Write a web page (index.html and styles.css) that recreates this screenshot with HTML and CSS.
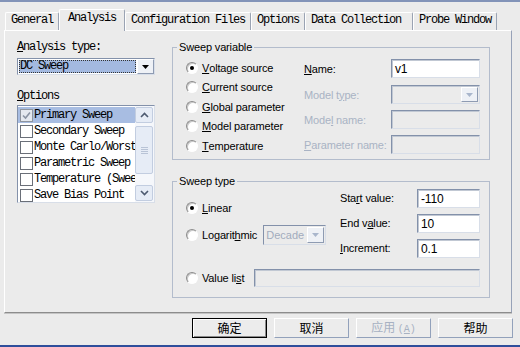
FILE: index.html
```html
<!DOCTYPE html>
<html lang="en">
<head>
    <meta charset="UTF-8">
    <title>Simulation Settings</title>
    <link rel="stylesheet" href="styles.css">
</head>
<body>
    <div class="dialog">
        <div class="tabs">
            <div class="tab">General</div>
            <div class="tab tab-active">Analysis</div>
            <div class="tab">Configuration Files</div>
            <div class="tab">Options</div>
            <div class="tab">Data Collection&nbsp;</div>
            <div class="tab">Probe Window</div>
        </div>

        <div class="panel">
            <!-- left column: analysis type + options list -->
            <div class="left">
                <div class="mono-label"><u>A</u>nalysis type:</div>
                <div class="combo">
                    <div class="combo-value"><span>DC Sweep</span></div>
                    <div class="combo-btn">
                        <svg width="7" height="4" viewBox="0 0 7 4"><path d="M0 0h7L3.5 4z" fill="#000"/></svg>
                    </div>
                </div>

                <div class="mono-label options-label"><u>O</u>ptions</div>
                <div class="listbox">
                    <div class="list-items">
                        <div class="item item-selected"><span class="check check-on"><svg width="9" height="9" viewBox="0 0 9 9"><path d="M1 4.5l2.5 2.5L8 1.5" fill="none" stroke="#8a93a3" stroke-width="1.6"/></svg></span>Primary Sweep</div>
                        <div class="item"><span class="check"></span>Secondary Sweep</div>
                        <div class="item"><span class="check"></span>Monte Carlo/Worst</div>
                        <div class="item"><span class="check"></span>Parametric Sweep</div>
                        <div class="item"><span class="check"></span>Temperature (Swee</div>
                        <div class="item"><span class="check"></span>Save Bias Point</div>
                    </div>
                    <div class="scrollbar">
                        <div class="sb-btn">
                            <svg width="9" height="6" viewBox="0 0 9 6"><path d="M1 5l3.5-3.5L8 5" fill="none" stroke="#4d5a70" stroke-width="1.6"/></svg>
                        </div>
                        <div class="sb-track">
                            <div class="sb-thumb">
                                <span></span><span></span><span></span><span></span>
                            </div>
                        </div>
                        <div class="sb-btn">
                            <svg width="9" height="6" viewBox="0 0 9 6"><path d="M1 1l3.5 3.5L8 1" fill="none" stroke="#4d5a70" stroke-width="1.6"/></svg>
                        </div>
                    </div>
                </div>
            </div>

            <!-- right column: sweep groups -->
            <div class="right">
                <fieldset class="group">
                    <legend>Sweep variable</legend>
                    <div class="group-body">
                        <div class="radio-list">
                            <label class="radio-row"><span class="radio radio-on"></span><u>V</u>oltage source</label>
                            <label class="radio-row"><span class="radio"></span><u>C</u>urrent source</label>
                            <label class="radio-row"><span class="radio"></span><u>G</u>lobal parameter</label>
                            <label class="radio-row"><span class="radio"></span><u>M</u>odel parameter</label>
                            <label class="radio-row"><span class="radio"></span><u>T</u>emperature</label>
                        </div>
                        <div class="fields">
                            <div class="field-row">
                                <span class="field-label"><u>N</u>ame:</span>
                                <div class="input">v1</div>
                            </div>
                            <div class="field-row field-row-gap">
                                <span class="field-label disabled">Model t<u>y</u>pe:</span>
                                <div class="input input-disabled input-combo">
                                    <div class="mini-btn">
                                        <svg width="7" height="4" viewBox="0 0 7 4"><path d="M0 0h7L3.5 4z" fill="#a9b6cc"/></svg>
                                    </div>
                                </div>
                            </div>
                            <div class="field-row">
                                <span class="field-label disabled">Mode<u>l</u> name:</span>
                                <div class="input input-disabled"></div>
                            </div>
                            <div class="field-row">
                                <span class="field-label disabled"><u>P</u>arameter name:</span>
                                <div class="input input-disabled"></div>
                            </div>
                        </div>
                    </div>
                </fieldset>

                <fieldset class="group group-type">
                    <legend>Sweep type</legend>
                    <div class="type-body">
                        <div class="type-top">
                            <div class="type-radios">
                                <label class="radio-row"><span class="radio radio-on"></span><u>L</u>inear</label>
                                <label class="radio-row radio-row-log">
                                    <span class="radio"></span>Logarit<u>h</u>mic
                                    <div class="decade">
                                        <span>Decade</span>
                                        <div class="mini-btn">
                                            <svg width="7" height="4" viewBox="0 0 7 4"><path d="M0 0h7L3.5 4z" fill="#a9b6cc"/></svg>
                                        </div>
                                    </div>
                                </label>
                            </div>
                            <div class="values">
                                <span class="field-label">Sta<u>r</u>t value:</span>
                                <div class="input">-110</div>
                                <span class="field-label">End v<u>a</u>lue:</span>
                                <div class="input">10</div>
                                <span class="field-label"><u>I</u>ncrement:</span>
                                <div class="input">0.1</div>
                            </div>
                        </div>
                        <label class="radio-row value-list">
                            <span class="radio"></span>Value li<u>s</u>t
                            <div class="input input-disabled input-wide"></div>
                        </label>
                    </div>
                </fieldset>
            </div>
        </div>

        <div class="buttons">
            <button class="btn btn-default">确定</button>
            <button class="btn">取消</button>
            <button class="btn btn-disabled">应用 <small>(<u>A</u>)</small></button>
            <button class="btn">帮助</button>
        </div>
    </div>
</body>
</html>
```

FILE: styles.css
```css
body {
    margin: 0;
    background-color: #ebebeb;
    font-family: "Liberation Sans", Arial, sans-serif;
    font-size: 11px;
    letter-spacing: -0.15px;
    color: #000;
}

.dialog {
    width: 520px;
    height: 347px;
    box-sizing: border-box;
    border-top: 2px solid #8293b8;
    border-bottom: 2px solid #2f4e9b;
}

/* tabs */

.tabs {
    display: flex;
    align-items: flex-end;
    height: 28px;
    padding-left: 5px;
}

.tab {
    height: 18px;
    box-sizing: border-box;
    padding: 1px 5px 0;
    font-family: "Liberation Mono", monospace;
    font-size: 12px;
    letter-spacing: -1.2px;
    line-height: 13px;
    white-space: pre;
    border-top: 1px solid #fff;
    border-left: 1px solid #fff;
    border-right: 1px solid #9aa3b3;
    border-radius: 2px 2px 0 0;
}

.tab-active {
    position: relative;
    height: 22px;
    margin-bottom: -1px;
    padding: 2px 8px 0;
    background-color: #ebebeb;
    z-index: 2;
}

.panel {
    display: flex;
    gap: 17px;
    height: 283px;
    box-sizing: border-box;
    margin: 0 8px 0 4px;
    padding: 10px 0 0 12px;
    border-top: 1px solid #fff;
    border-left: 1px solid #fff;
    border-right: 1px solid #97a2b8;
    border-bottom: 1px solid #8c8c8c;
    box-shadow: 0 1px 0 #c4c4c4;
}

/* left column */

.left {
    width: 138px;
}

.mono-label,
.combo-value span,
.item {
    font-family: "Liberation Mono", monospace;
    font-size: 12px;
    letter-spacing: -1.2px;
    line-height: 13px;
}

.combo {
    display: flex;
    height: 17px;
    margin-top: 4px;
    box-sizing: border-box;
    border: 1px solid;
    border-color: #8391aa #d8dee8 #d8dee8 #8391aa;
    background-color: #fff;
}

.combo-value {
    flex: 1;
    padding: 1px;
}

.combo-value span {
    display: block;
    height: 100%;
    box-sizing: border-box;
    padding-left: 1px;
    background-color: #a3b9e0;
    outline: 1px dotted #333;
    outline-offset: -1px;
}

.combo-btn, .mini-btn {
    display: flex;
    align-items: center;
    justify-content: center;
    width: 17px;
    flex-shrink: 0;
    box-sizing: border-box;
    background-color: #eef1f6;
    border: 1px solid;
    border-color: #fff #8e9bb2 #8e9bb2 #fff;
}

.options-label {
    margin-top: 15px;
}

.listbox {
    display: flex;
    height: 98px;
    margin-top: 2px;
    box-sizing: border-box;
    border: 1px solid;
    border-color: #8391aa #d8dee8 #d8dee8 #8391aa;
    background-color: #fff;
}

.list-items {
    flex: 1;
    padding-top: 1px;
    overflow: hidden;
}

.item {
    display: flex;
    align-items: center;
    height: 16px;
    padding-left: 2px;
    white-space: nowrap;
}

.item-selected {
    background-color: #a8bde2;
}

.check {
    display: flex;
    align-items: center;
    justify-content: center;
    width: 13px;
    height: 13px;
    margin-right: 1px;
    box-sizing: border-box;
    border: 1px solid #6a6f78;
    background-color: #fff;
    flex-shrink: 0;
}

.check-on {
    background-color: #e4e8ef;
    border-color: #8e949e;
}

.scrollbar {
    display: flex;
    flex-direction: column;
    width: 18px;
    padding: 1px 1px 1px 0;
    background-color: #f5f7fb;
}

.sb-btn {
    display: flex;
    align-items: center;
    justify-content: center;
    height: 16px;
    box-sizing: border-box;
    border: 1px solid #c2cde0;
    border-radius: 2px;
    background-color: #e6ecf6;
}

.sb-track {
    flex: 1;
    padding: 3px 0;
}

.sb-thumb {
    display: flex;
    flex-direction: column;
    align-items: center;
    justify-content: center;
    gap: 1px;
    height: 48px;
    box-sizing: border-box;
    border: 1px solid #c2cde0;
    border-radius: 2px;
    background-color: #e6ecf6;
}

.sb-thumb span {
    width: 7px;
    height: 1px;
    background-color: #b8c3d6;
}

/* right column */

.right {
    width: 318px;
}

.group {
    margin: 0;
    padding: 0 9px 3px 13px;
    border: 1px solid #b3bccc;
    min-width: 0;
}

.group legend {
    margin-left: -9px;
    padding: 0 2px;
    line-height: 13px;
}

.group-body {
    display: flex;
    padding-top: 4px;
}

.radio-list {
    width: 118px;
}

.radio-row {
    display: flex;
    align-items: center;
    height: 19.5px;
    white-space: nowrap;
}

.radio {
    width: 12px;
    height: 12px;
    margin-right: 4px;
    box-sizing: border-box;
    border-radius: 50%;
    border: 1px solid;
    border-color: #8c8c8c #fff #fff #8c8c8c;
    background-color: #fff;
    box-shadow: inset 1px 1px 0 #c9c9c9;
    flex-shrink: 0;
    display: flex;
    align-items: center;
    justify-content: center;
}

.radio-on::after {
    content: "";
    width: 4px;
    height: 4px;
    border-radius: 50%;
    background-color: #000;
}

.fields {
    display: flex;
    flex-direction: column;
    gap: 6px;
    padding-top: 1px;
}

.field-row {
    display: flex;
    align-items: center;
}

.field-row-gap {
    margin-top: 1px;
}

.field-label {
    width: 87px;
    white-space: nowrap;
}

.disabled {
    color: #a9b3c4;
}

.input {
    width: 89px;
    height: 19px;
    box-sizing: border-box;
    padding: 2px 3px 0;
    border: 1px solid;
    border-color: #8391aa #d8dee8 #d8dee8 #8391aa;
    box-shadow: inset 1px 1px 0 #c1c8d3;
    background-color: #fff;
    font-size: 12px;
    line-height: 14px;
}

.input-disabled {
    background-color: #ebebeb;
}

.input-combo {
    display: flex;
    justify-content: flex-end;
    padding: 1px;
}

.input-combo .mini-btn {
    height: 100%;
}

/* sweep type */

.group-type {
    margin-top: 15px;
    padding-bottom: 9px;
}

.type-top {
    display: flex;
    justify-content: space-between;
    padding-top: 1px;
}

.type-radios {
    display: flex;
    flex-direction: column;
    gap: 7px;
    padding-top: 10px;
}

.radio-row-log {
    height: 19px;
}

.decade {
    display: flex;
    flex-shrink: 0;
    width: 63px;
    height: 20px;
    margin-left: 6px;
    box-sizing: border-box;
    padding: 1px;
    border: 1px solid;
    border-color: #8391aa #d8dee8 #d8dee8 #8391aa;
    color: #a2acbd;
    font-size: 11px;
    letter-spacing: 0;
}

.decade span {
    flex: 1;
    padding-left: 1px;
    line-height: 16px;
    overflow: hidden;
}

.values {
    display: grid;
    grid-template-columns: 77px 63px;
    row-gap: 6px;
    align-items: center;
}

.values .field-label {
    width: auto;
}

.values .input {
    width: 63px;
}

.value-list {
    height: 19px;
    margin-top: 11px;
}

.input-wide {
    flex: 1;
    width: auto;
    height: 18px;
    margin-left: 10px;
}

/* bottom buttons */

.buttons {
    display: flex;
    justify-content: flex-end;
    gap: 7px;
    padding: 5px 7px 0 0;
}

.btn {
    width: 75px;
    height: 20px;
    padding: 0;
    border: 1px solid;
    border-color: #fff #92a1bb #92a1bb #fff;
    background-color: #ececec;
    font-family: "Noto Sans CJK SC", sans-serif;
    font-size: 12px;
    line-height: 16px;
    color: #000;
}

.btn-default {
    border: 1px solid #000;
    box-shadow: inset 1px 1px 0 #fff, inset -1px -1px 0 #8a8a8a;
}

.btn-disabled {
    color: #a7b1c2;
}

.btn small {
    font-family: "Liberation Mono", monospace;
    font-size: 10px;
}
```
